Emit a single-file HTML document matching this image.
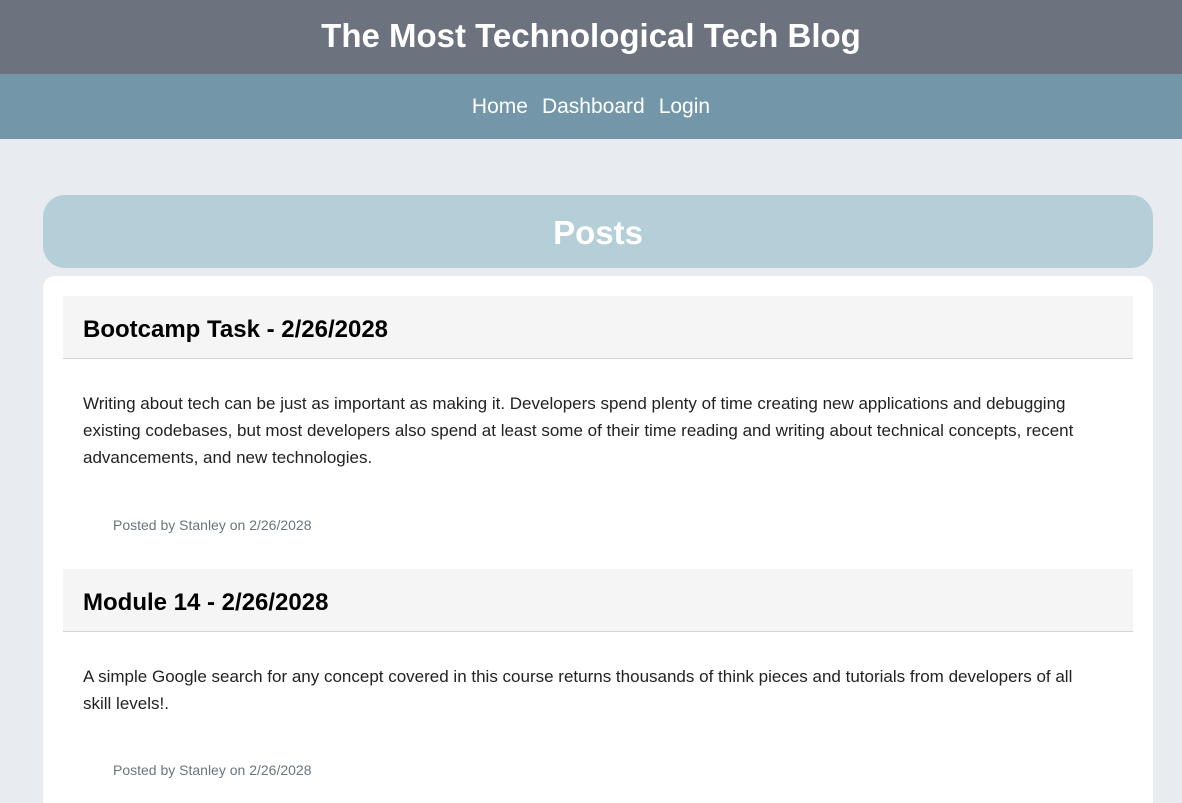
<!DOCTYPE html>
<html><head><meta charset="utf-8"><style>
*{box-sizing:border-box;margin:0;padding:0}
html,body{width:1182px;height:803px;overflow:hidden}
body{background:#e8ebef;font-family:"Liberation Sans","DejaVu Sans",sans-serif}
.top{height:74px;background:#6c727e;color:#fff;text-align:center;font-size:33px;font-weight:bold;line-height:72px}
.nav{height:65px;background:#7396a9;text-align:center;line-height:66px;font-size:21px;color:#fff}
.nav span{margin:0 7px}
.ph{position:absolute;left:43px;top:195px;width:1110px;height:73px;background:#b5cfd9;border-radius:22px;color:#fff;text-align:center;font-weight:bold;font-size:33px;line-height:76px}
.card{position:absolute;left:43px;top:276px;width:1110px;height:527px;background:#fff;border-radius:12px 12px 0 0;padding:20px}
.h{background:#f5f5f5;border-bottom:1px solid #d6d6d6;height:63px;padding-left:20px;font-size:24px;font-weight:bold;line-height:68px;color:#000}
.b{padding:31px 20px 0;font-size:17px;line-height:27px;color:#222}
.f{padding-left:50px;font-size:14px;color:#6c757d}
</style></head><body>
<div class="top">The Most Technological Tech Blog</div>
<div class="nav"><span>Home</span><span>Dashboard</span><span>Login</span></div>
<div class="ph">Posts</div>
<div class="card">
<div class="h">Bootcamp Task - 2/26/2028</div>
<div class="b" style="height:158px">Writing about tech can be just as important as making it. Developers spend plenty of time creating new applications and debugging existing codebases, but most developers also spend at least some of their time reading and writing about technical concepts, recent advancements, and new technologies.</div>
<div class="f" style="height:52px">Posted by Stanley on 2/26/2028</div>
<div class="h">Module 14 - 2/26/2028</div>
<div class="b" style="height:130px;padding-right:40px">A simple Google search for any concept covered in this course returns thousands of think pieces and tutorials from developers of all skill levels!.</div>
<div class="f">Posted by Stanley on 2/26/2028</div>
</div>
</body></html>
